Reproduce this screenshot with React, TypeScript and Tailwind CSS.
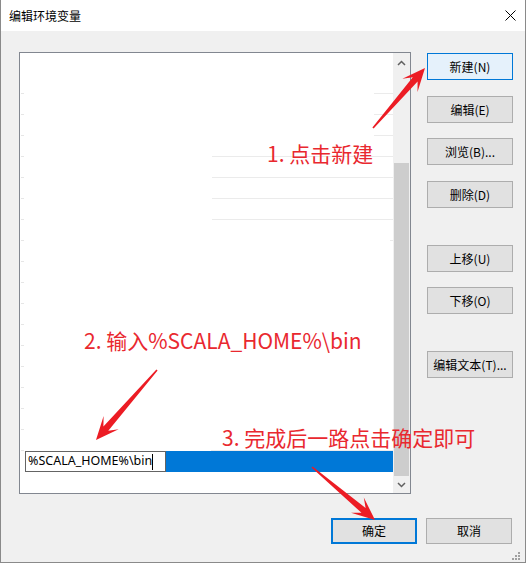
import React from "react";

function arrowPoints(x1: number, y1: number, x2: number, y2: number) {
  const dx = x2 - x1;
  const dy = y2 - y1;
  const L = Math.hypot(dx, dy);
  const ux = dx / L;
  const uy = dy / L;
  const nx = -uy;
  const ny = ux;
  const H = 23;
  const N = 15;
  const W = 10;
  const w = 3.2;
  const t = 0.8;
  const p = (a: number, b: number) =>
    `${(x2 - ux * a + nx * b).toFixed(1)},${(y2 - uy * a + ny * b).toFixed(1)}`;
  return [
    `${(x1 + nx * t).toFixed(1)},${(y1 + ny * t).toFixed(1)}`,
    p(N, w),
    p(H, W),
    `${x2},${y2}`,
    p(H, -W),
    p(N, -w),
    `${(x1 - nx * t).toFixed(1)},${(y1 - ny * t).toFixed(1)}`,
  ].join(" ");
}

const lines: Record<number, number> = {
  0: 19,
  1: 19,
  2: 19,
  3: 181,
  4: 181,
  5: 181,
  6: 181,
  7: 3,
  17: 182,
};

function Btn({
  label,
  mt,
  primary,
}: {
  label: string;
  mt: string;
  primary?: boolean;
}) {
  return (
    <div
      className={
        "h-[27px] w-[86px] flex items-center justify-center text-[12px] text-black border " +
        (primary ? "bg-[#e5f1fb] border-[#0078d7] " : "bg-[#e1e1e1] border-[#adadad] ") +
        mt
      }
    >
      {label}
    </div>
  );
}

export default function App() {
  const rows = Array.from({ length: 18 }, (_, i) => i);
  return (
    <div className="w-[527px] h-[563px] bg-white relative overflow-hidden font-['Noto_Sans_CJK_SC','Noto_Sans',sans-serif]">
      <div className="w-[526px] h-[563px] flex flex-col border-l border-r border-b border-[#8a8a8a]">
        {/* title bar */}
        <div className="h-[31px] bg-white flex items-center justify-between pl-[8px] pr-[9px]">
          <span className="text-[12px] text-black leading-none">编辑环境变量</span>
          <svg width="11" height="11" viewBox="0 0 11 11">
            <path d="M0.5 0.5 L10.5 10.5 M10.5 0.5 L0.5 10.5" stroke="#000" strokeWidth="1" />
          </svg>
        </div>
        {/* body */}
        <div className="flex-1 bg-[#f0f0f0] flex flex-col pl-[18px] pt-[21px]">
          <div className="flex">
            {/* listbox */}
            <div className="w-[392px] h-[442px] border border-[#828790] bg-white flex">
              <div className="flex-1 flex flex-col pt-[20px]">
                {rows.map((i) => (
                  <div key={i} className="h-[21px] flex flex-col justify-end">
                    <div className="h-px flex">
                      <div className="ml-[1px] w-[3px] h-px bg-[#e6e6e6]" />
                      {lines[i] ? (
                        <div className="ml-auto h-px bg-[#ebebeb]" style={{ width: lines[i] }} />
                      ) : null}
                    </div>
                  </div>
                ))}
                <div className="h-[21px] flex">
                  <div className="w-[5px] bg-white" />
                  <div className="w-[141px] h-[21px] border border-[#646464] bg-white flex items-center pl-[2px]">
                    <span className="text-[12.5px] text-black font-['Noto_Sans',sans-serif] leading-none">
                      %SCALA_HOME%\bin
                    </span>
                    <div className="w-px h-[16px] bg-black" />
                  </div>
                  <div className="flex-1 bg-[#0078d7]" />
                </div>
              </div>
              {/* scrollbar */}
              <div className="w-[17px] bg-[#f0f0f0] flex flex-col items-center">
                <div className="h-[20px] flex items-center justify-center">
                  <svg width="9" height="6" viewBox="0 0 9 6">
                    <path d="M1 5 L4.5 1.5 L8 5" stroke="#606060" strokeWidth="1.5" fill="none" />
                  </svg>
                </div>
                <div className="h-[90px]" />
                <div className="w-[15px] flex-1 bg-[#cdcdcd]" />
                <div className="h-[17px] flex items-center justify-center">
                  <svg width="9" height="6" viewBox="0 0 9 6">
                    <path d="M1 1 L4.5 4.5 L8 1" stroke="#606060" strokeWidth="1.5" fill="none" />
                  </svg>
                </div>
              </div>
            </div>
            {/* buttons */}
            <div className="ml-[16px] w-[86px] flex flex-col">
              <Btn label="新建(N)" mt="mt-[1px]" primary />
              <Btn label="编辑(E)" mt="mt-[16px]" />
              <Btn label="浏览(B)..." mt="mt-[15px]" />
              <Btn label="删除(D)" mt="mt-[16px]" />
              <Btn label="上移(U)" mt="mt-[37px]" />
              <Btn label="下移(O)" mt="mt-[15px]" />
              <Btn label="编辑文本(T)..." mt="mt-[37px]" />
            </div>
          </div>
          <div className="mt-[24px] flex justify-end pr-[13px] gap-[9px]">
            <div className="w-[86px] h-[26px] border-2 border-[#0078d7] bg-[#e1e1e1] flex items-center justify-center text-[12px] text-black">
              确定
            </div>
            <div className="w-[86px] h-[26px] border border-[#adadad] bg-[#e1e1e1] flex items-center justify-center text-[12px] text-black">
              取消
            </div>
          </div>
        </div>
      </div>

      {/* resize grip */}
      <svg className="absolute left-[512px] top-[552px]" width="9" height="9" viewBox="0 0 9 9">
        <rect x="6" y="0" width="2" height="2" fill="#a0a0a0" />
        <rect x="3" y="3" width="2" height="2" fill="#a0a0a0" />
        <rect x="6" y="3" width="2" height="2" fill="#a0a0a0" />
        <rect x="0" y="6" width="2" height="2" fill="#a0a0a0" />
        <rect x="3" y="6" width="2" height="2" fill="#a0a0a0" />
        <rect x="6" y="6" width="2" height="2" fill="#a0a0a0" />
      </svg>

      {/* annotations */}
      <svg className="absolute left-0 top-0 pointer-events-none" width="527" height="563">
        <polygon points={arrowPoints(373, 128, 425, 68)} fill="#ec1c24" />
        <polygon points={arrowPoints(157, 370, 96, 440)} fill="#ec1c24" />
        <polygon points={arrowPoints(312, 467, 375, 520)} fill="#ec1c24" />
      </svg>
      <div className="absolute left-[267px] top-[140px] text-[21px] leading-[27px] text-[#e9282f] whitespace-nowrap">
        1. 点击新建
      </div>
      <div className="absolute left-[84px] top-[327px] text-[21px] leading-[27px] text-[#e9282f] whitespace-nowrap">
        2. 输入%SCALA_HOME%\bin
      </div>
      <div className="absolute left-[222px] top-[424px] text-[21px] leading-[27px] text-[#e9282f] whitespace-nowrap">
        3. 完成后一路点击确定即可
      </div>
    </div>
  );
}
